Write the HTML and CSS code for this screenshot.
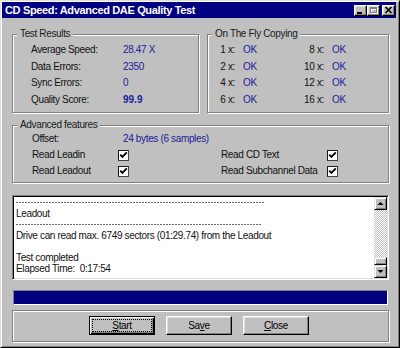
FILE: index.html
```html
<!DOCTYPE html>
<html>
<head>
<meta charset="utf-8">
<title>CD Speed: Advanced DAE Quality Test</title>
<link rel="stylesheet" href="styles.css">
</head>
<body>
<div class="window">
  <div class="titlebar">
    <span class="title">CD Speed: Advanced DAE Quality Test</span>
    <div class="tbtns">
      <span class="tbtn"><svg width="11" height="9" viewBox="0 0 11 9"><rect x="2" y="6" width="5" height="2" fill="#000"/></svg></span>
      <span class="tbtn"><svg width="11" height="9" viewBox="0 0 11 9"><path d="M2.5 1.5h6v5h-6z M2 1h7v1.2H2z" fill="none" stroke="#fff" stroke-width="1" transform="translate(1 1)"/><path d="M2.5 1.5h6v5h-6z" fill="none" stroke="#808080" stroke-width="1"/><rect x="2" y="1" width="7" height="2" fill="#808080"/></svg></span>
      <span class="tbtn close"><svg width="11" height="9" viewBox="0 0 11 9"><path d="M2.5 1 L8.5 7 M8.5 1 L2.5 7" stroke="#000" stroke-width="1.6"/></svg></span>
    </div>
  </div>
  <div class="client">
    <div class="toprow">
      <fieldset class="group">
        <legend>Test Results</legend>
        <div class="kv">
          <span class="lbl">Average Speed:</span><span class="val">28.47 X</span>
          <span class="lbl">Data Errors:</span><span class="val">2350</span>
          <span class="lbl">Sync Errors:</span><span class="val">0</span>
          <span class="lbl">Quality Score:</span><span class="val bold">99.9</span>
        </div>
      </fieldset>
      <fieldset class="group">
        <legend>On The Fly Copying</legend>
        <div class="fly">
          <span class="sp">1 x:</span><span class="val">OK</span><span class="sp">8 x:</span><span class="val">OK</span>
          <span class="sp">2 x:</span><span class="val">OK</span><span class="sp">10 x:</span><span class="val">OK</span>
          <span class="sp">4 x:</span><span class="val">OK</span><span class="sp">12 x:</span><span class="val">OK</span>
          <span class="sp">6 x:</span><span class="val">OK</span><span class="sp">16 x:</span><span class="val">OK</span>
        </div>
      </fieldset>
    </div>
    <fieldset class="group adv">
      <legend>Advanced features</legend>
      <div class="advgrid">
        <span class="lbl">Offset:</span><span class="val offset">24 bytes (6 samples)</span>
        <span class="lbl">Read Leadin</span>
        <span class="cbcell"><span class="cb"><svg width="9" height="9" viewBox="0 0 9 9"><path d="M1.2 3.6 L3.4 5.9 L7.8 1.4" fill="none" stroke="#000" stroke-width="1.9"/></svg></span></span>
        <span class="lbl">Read CD Text</span>
        <span class="cbcell"><span class="cb"><svg width="9" height="9" viewBox="0 0 9 9"><path d="M1.2 3.6 L3.4 5.9 L7.8 1.4" fill="none" stroke="#000" stroke-width="1.9"/></svg></span></span>
        <span class="lbl">Read Leadout</span>
        <span class="cbcell"><span class="cb"><svg width="9" height="9" viewBox="0 0 9 9"><path d="M1.2 3.6 L3.4 5.9 L7.8 1.4" fill="none" stroke="#000" stroke-width="1.9"/></svg></span></span>
        <span class="lbl">Read Subchannel Data</span>
        <span class="cbcell"><span class="cb"><svg width="9" height="9" viewBox="0 0 9 9"><path d="M1.2 3.6 L3.4 5.9 L7.8 1.4" fill="none" stroke="#000" stroke-width="1.9"/></svg></span></span>
      </div>
    </fieldset>
    <div class="log">
      <div class="logtext">
        <div class="dash"></div>
        <div class="line">Leadout</div>
        <div class="dash short"></div>
        <div class="line">Drive can read max. 6749 sectors (01:29.74) from the Leadout</div>
        <div class="line">&nbsp;</div>
        <div class="line">Test completed</div>
        <div class="line">Elapsed Time:&nbsp;&nbsp;0:17:54</div>
      </div>
      <div class="vscroll">
        <span class="sbtn"><svg width="11" height="11" viewBox="0 0 11 11"><path d="M2.5 7 L5.5 4 L8.5 7 Z" fill="#000"/></svg></span>
        <span class="track"><span class="thumb"></span></span>
        <span class="sbtn"><svg width="11" height="11" viewBox="0 0 11 11"><path d="M2.5 4 L5.5 7 L8.5 4 Z" fill="#000"/></svg></span>
      </div>
    </div>
    <div class="progress"><div class="fill" style="width:100%"></div></div>
    <div class="btnpanel">
      <button class="btn default"><u>S</u>tart</button>
      <button class="btn">Sa<u>v</u>e</button>
      <button class="btn"><u>C</u>lose</button>
    </div>
  </div>
</div>
</body>
</html>
```

FILE: styles.css
```css
* { box-sizing: border-box; }
html, body { margin: 0; padding: 0; }
body {
  width: 400px;
  height: 348px;
  overflow: hidden;
  background: #c0c0c0;
  font-family: "Liberation Sans", Arial, sans-serif;
  font-size: 10px;
  letter-spacing: -0.35px;
  color: #111;
}
.window {
  width: 400px;
  height: 348px;
  background: #c0c0c0;
  border: 1px solid;
  border-color: #dfdfdf #000 #000 #dfdfdf;
  box-shadow: inset 1px 1px 0 #fff, inset -1px -1px 0 #808080;
  padding: 1px 3px 3px 1px;
  display: flex;
  flex-direction: column;
}
.titlebar {
  height: 16px;
  background: #000080;
  display: flex;
  align-items: center;
  justify-content: space-between;
  padding: 0 1px 0 3px;
}
.title {
  color: #fff;
  font-weight: bold;
  font-size: 11px;
  letter-spacing: -0.35px;
  line-height: 16px;
  white-space: nowrap;
}
.tbtns { display: flex; }
.tbtn {
  width: 13px;
  height: 11px;
  border: 1px solid;
  border-color: #fff #000 #000 #fff;
  box-shadow: inset -1px -1px 0 #808080, inset 1px 1px 0 #dfdfdf;
  background: #c0c0c0;
  display: flex;
}
.tbtn svg { display: block; }
.tbtn.close { margin-left: 2px; }

.client {
  padding: 10px 7px 0 10px;
  display: flex;
  flex-direction: column;
}
.group {
  margin: 0;
  min-width: 0;
  border: 1px solid #808080;
  box-shadow: inset 1px 1px 0 #fff, 1px 1px 0 #fff;
  padding: 0 4px;
}
.group legend {
  padding: 0 3px;
  margin: 0;
  line-height: 12px;
  background: #c0c0c0;
  color: #1a1a1a;
}
.toprow {
  display: grid;
  grid-template-columns: 187px 1fr;
  column-gap: 8px;
}
.kv {
  display: grid;
  grid-template-columns: 92px 1fr;
  grid-auto-rows: 16.5px;
  line-height: 16.5px;
  padding: 2px 0 4px 14px;
}
.fly {
  display: grid;
  grid-template-columns: 23px 49px 24px 1fr;
  column-gap: 8px;
  grid-auto-rows: 16.5px;
  line-height: 16.5px;
  padding: 2px 0 4px 0;
}
.sp { text-align: right; white-space: nowrap; }
.lbl { white-space: nowrap; }
.val { color: #20209a; white-space: nowrap; }
.bold { font-weight: bold; letter-spacing: 0; }

.adv { margin-top: 6px; }
.advgrid {
  display: grid;
  grid-template-columns: 86px 103px 106px 1fr;
  grid-auto-rows: 16px;
  line-height: 16px;
  padding: 0 0 3px 15px;
}
.offset { grid-column: 2 / span 3; padding-left: 5px; }
.cbcell { display: flex; align-items: center; }
.cb {
  width: 11px;
  height: 11px;
  background: #fff;
  border: 1px solid;
  border-color: #1a1a1a #444 #444 #1a1a1a;
  display: flex;
}
.cb svg { display: block; }

.log {
  margin-top: 12px;
  height: 85px;
  border: 1px solid;
  border-color: #808080 #fff #fff #808080;
  box-shadow: inset 1px 1px 0 #000, inset -1px -1px 0 #dfdfdf;
  padding: 1px;
  background: #fff;
  display: flex;
}
.logtext {
  flex: 1;
  padding-left: 2px;
  line-height: 11px;
  overflow: hidden;
  color: #111;
}
.line { white-space: nowrap; height: 11px; }
.dash {
  height: 11px;
  width: 248px;
  background: repeating-linear-gradient(90deg, #6a6a6a 0 2px, transparent 2px 3px) 0 5px / 100% 1px no-repeat;
}
.dash.short { width: 245px; }
.vscroll {
  width: 13px;
  display: flex;
  flex-direction: column;
  background: repeating-conic-gradient(#fff 0 25%, #c0c0c0 0 50%) 0 0 / 2px 2px;
}
.sbtn, .thumb {
  border: 1px solid;
  border-color: #dfdfdf #000 #000 #dfdfdf;
  box-shadow: inset 1px 1px 0 #fff, inset -1px -1px 0 #808080;
  background: #c0c0c0;
}
.sbtn { width: 13px; height: 13px; display: flex; }
.sbtn svg { display: block; }
.track {
  flex: 1;
  display: flex;
  flex-direction: column;
  justify-content: flex-end;
}
.thumb { height: 8px; }

.progress {
  margin: 10px 1px 0 1px;
  height: 15px;
  border: 1px solid;
  border-color: #808080 #fff #fff #808080;
  display: flex;
}
.fill { height: 100%; background: #000080; }

.btnpanel {
  margin-top: 5px;
  border: 1px solid #808080;
  box-shadow: inset 1px 1px 0 #fff, 1px 1px 0 #fff;
  padding: 5px 0 6px 76px;
  display: flex;
  gap: 11px;
}
.btn {
  width: 66px;
  height: 19px;
  margin: 0;
  padding: 0;
  font: inherit;
  letter-spacing: inherit;
  color: #000;
  background: #c0c0c0;
  border: 1px solid;
  border-color: #fff #000 #000 #fff;
  box-shadow: inset -1px -1px 0 #808080, inset 1px 1px 0 #dfdfdf;
}
.btn.default {
  border-color: #000;
  box-shadow: inset 1px 1px 0 #fff, inset -1px -1px 0 #000, inset -2px -2px 0 #808080;
  outline: 1px dotted #000;
  outline-offset: -4px;
}
.btn u { text-underline-offset: 1px; }
```
